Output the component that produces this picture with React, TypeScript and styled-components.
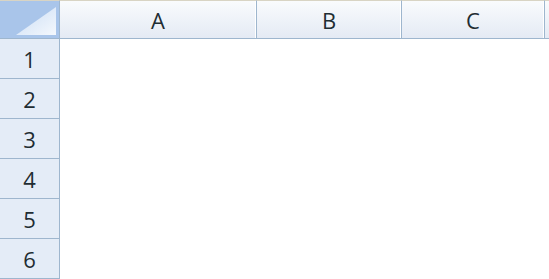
import React from 'react';
import styled, { createGlobalStyle } from 'styled-components';

const GlobalStyle = createGlobalStyle`
  html, body {
    margin: 0;
    padding: 0;
    background: #ffffff;
  }
`;

const Sheet = styled.div`
  display: grid;
  grid-template-columns: 60px 197px 145px 143px 1fr;
  grid-template-rows: 39px repeat(6, 40px);
  width: 549px;
  height: 279px;
  overflow: hidden;
  font-family: 'Open Sans', 'Noto Sans', sans-serif;
  font-size: 22px;
  color: #1f2d33;
  background: #ffffff;
`;

const Corner = styled.div`
  position: relative;
  background: #a9c5ea;
  border-right: 1px solid #9eb6ce;
  border-bottom: 1px solid #9eb6ce;
  border-top: 1px solid #d8d4c4;
  box-sizing: border-box;
`;

const Triangle = styled.svg`
  position: absolute;
  right: 3px;
  bottom: 3px;
`;

const ColHead = styled.div<{ $last?: boolean }>`
  display: flex;
  align-items: center;
  justify-content: center;
  box-sizing: border-box;
  background: linear-gradient(#f9fbfd, #e4eaf4);
  border-top: 1px solid #d8d4c4;
  border-bottom: 1px solid #9eb6ce;
  border-right: ${(p) => (p.$last ? 'none' : '1px solid #9eb6ce')};
  box-shadow: ${(p) => (p.$last ? 'none' : 'inset -1px 0 0 #ffffff')};
  padding-top: 1px;
`;

const RowHead = styled.div`
  display: flex;
  align-items: center;
  justify-content: center;
  box-sizing: border-box;
  background: #e4ecf7;
  border-right: 1px solid #9eb6ce;
  border-bottom: 1px solid #9eb6ce;
  padding-top: 1px;
`;

const Cell = styled.div`
  background: #ffffff;
`;

const columns = ['A', 'B', 'C'];
const rows = [1, 2, 3, 4, 5, 6];

export default function App() {
  return (
    <>
      <GlobalStyle />
      <Sheet>
        <Corner>
          <Triangle width="40" height="28" viewBox="0 0 40 28">
            <defs>
              <linearGradient id="tri" x1="0" y1="0" x2="1" y2="1">
                <stop offset="0" stopColor="#c9dcf4" />
                <stop offset="1" stopColor="#f4f8fd" />
              </linearGradient>
            </defs>
            <polygon points="40,0 40,28 0,28" fill="url(#tri)" />
          </Triangle>
        </Corner>
        {columns.map((c) => (
          <ColHead key={c}>{c}</ColHead>
        ))}
        <ColHead $last />
        {rows.map((r) => (
          <React.Fragment key={r}>
            <RowHead>{r}</RowHead>
            <Cell />
            <Cell />
            <Cell />
            <Cell />
          </React.Fragment>
        ))}
      </Sheet>
    </>
  );
}
